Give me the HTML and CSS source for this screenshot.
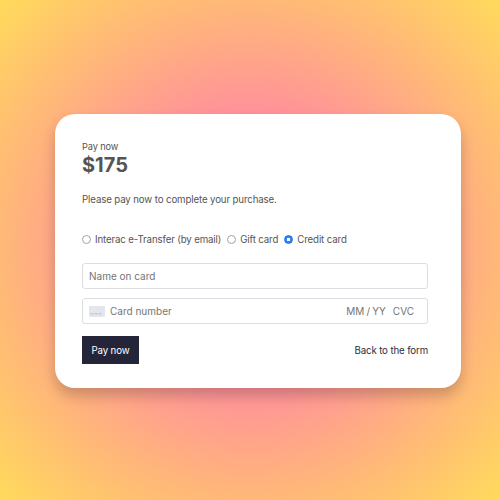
FILE: index.html
```html
<!DOCTYPE html>
<html lang="en">
<head>
    <meta charset="UTF-8">
    <meta name="viewport" content="width=device-width, initial-scale=1.0">
    <title>Pay now</title>
    <link rel="stylesheet" href="styles.css">
</head>
<body>

    <div class="pay-card">
        <p class="pay-label">Pay now</p>
        <h1 class="pay-amount">$175</h1>
        <p class="pay-note">Please pay now to complete your purchase.</p>

        <div class="pay-methods">
            <label class="method"><input type="radio" name="method">Interac e-Transfer (by email)</label>
            <label class="method"><input type="radio" name="method">Gift card</label>
            <label class="method"><input type="radio" name="method" checked>Credit card</label>
        </div>

        <input class="field" type="text" placeholder="Name on card">

        <div class="field card-field">
            <svg class="card-icon" width="16" height="11" viewBox="0 0 16 11">
                <rect width="16" height="11" rx="1" fill="#e4e6ee"/>
                <rect x="1.5" y="7" width="3" height="1.5" fill="#c6c9d6"/>
                <rect x="5.5" y="7" width="3" height="1.5" fill="#c6c9d6"/>
                <rect x="9.5" y="7" width="3" height="1.5" fill="#c6c9d6"/>
            </svg>
            <span class="card-number">Card number</span>
            <span class="card-expiry">MM / YY</span>
            <span class="card-cvc">CVC</span>
        </div>

        <div class="pay-actions">
            <button class="pay-button" type="button">Pay now</button>
            <a class="back-link" href="#">Back to the form</a>
        </div>
    </div>

</body>
</html>
```

FILE: styles.css
```css
html, body {
    height: 100%;
}

body {
    margin: 0;
    font-family: Inter, "Liberation Sans", sans-serif;
    color: #555;
    background: radial-gradient(circle at 50% 50%, #ff8a9c 0%, #ff929a 39%, #ffb878 70%, #ffdb5c 100%);
    padding: 114px 39px 0 55px;
    box-sizing: border-box;
}

.pay-card {
    box-sizing: border-box;
    width: 406px;
    height: 274px;
    background-color: #fff;
    border-radius: 20px;
    padding: 27px 33px 0 27px;
    box-shadow: 0 8px 14px rgba(0, 0, 0, 0.2);
}

.pay-label {
    margin: 0;
    font-size: 9.2px;
    letter-spacing: -0.12px;
    line-height: 11px;
}

.pay-amount {
    margin: 1px 0 0;
    font-size: 20px;
    line-height: 24px;
    font-weight: 700;
}

.pay-note {
    margin: 16px 0 0;
    font-size: 9.7px;
    letter-spacing: -0.13px;
    line-height: 14px;
}

.pay-methods {
    display: flex;
    gap: 6px;
    margin-top: 26px;
    height: 14px;
}

.method {
    display: flex;
    align-items: center;
    font-size: 9.7px;
    letter-spacing: -0.13px;
    line-height: 14px;
}

.method input {
    appearance: none;
    box-sizing: border-box;
    width: 9px;
    height: 9px;
    margin: 0 4px 2px 0;
    border: 1px solid #a3a3a3;
    border-radius: 50%;
    background-color: #fff;
}

.method input:checked {
    border-color: #1a73f0;
    background: radial-gradient(circle, #fff 0 1.5px, #2f80f5 2px);
}

.field {
    display: block;
    box-sizing: border-box;
    width: 346px;
    height: 26px;
    margin: 0;
    padding: 0 6px;
    border: 1px solid #dcdde0;
    border-radius: 3px;
    background-color: #fff;
    font-family: inherit;
    font-size: 10px;
    color: #757575;
}

.field::placeholder {
    color: #757575;
    opacity: 1;
}

input.field {
    margin-top: 16px;
}

.card-field {
    display: flex;
    align-items: center;
    margin-top: 9px;
}

.card-icon {
    margin-right: 5px;
}

.card-number {
    flex: 1;
}

.card-expiry {
    word-spacing: -0.6px;
}

.card-cvc {
    margin-left: 7px;
    margin-right: 7px;
}

.pay-actions {
    display: flex;
    justify-content: space-between;
    align-items: center;
    width: 346px;
    margin-top: 12px;
}

.pay-button {
    width: 57px;
    height: 28px;
    padding: 0;
    border: none;
    background-color: #25253a;
    color: #fff;
    font-family: inherit;
    font-size: 9.7px;
    letter-spacing: -0.13px;
}

.back-link {
    color: #2d2d3d;
    font-size: 9.7px;
    letter-spacing: -0.13px;
    text-decoration: none;
}
```
